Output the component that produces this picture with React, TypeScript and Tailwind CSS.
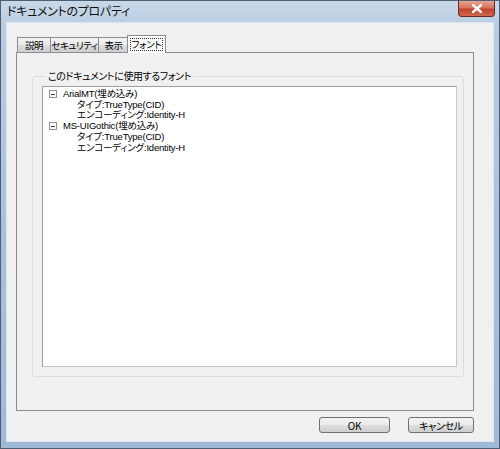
const jp = "font-['Noto_Sans_CJK_JP','Noto_Sans',sans-serif] [font-feature-settings:'palt']";
const tree = "font-['Liberation_Sans','Noto_Sans_CJK_JP',sans-serif] [font-feature-settings:'palt']";

const fonts = [
  {
    name: 'ArialMT(埋め込み)',
    props: ['タイプ:TrueType(CID)', 'エンコーディング:Identity-H'],
  },
  {
    name: 'MS-UIGothic(埋め込み)',
    props: ['タイプ:TrueType(CID)', 'エンコーディング:Identity-H'],
  },
];

const tabs = [
  { id: 'desc', label: '説明', w: 'w-[34px]' },
  { id: 'security', label: 'セキュリティ', w: 'w-[49px]' },
  { id: 'view', label: '表示', w: 'w-[31px]' },
  { id: 'font', label: 'フォント', w: 'w-[39px]' },
];

function MinusBox() {
  return (
    <span className="flex h-[8px] w-[8px] shrink-0 items-center justify-center border border-[#919191] bg-white">
      <span className="h-px w-[4px] bg-[#3c3c3c]" />
    </span>
  );
}

export default function App() {
  const current = 'font';

  return (
    <div
      className={`flex h-[449px] w-[500px] flex-col border border-[#4d5f74] bg-[linear-gradient(180deg,#c9d8e8_0%,#b8cde2_6%,#a9c1dc_50%,#9fb9d7_100%)] ${jp}`}
    >
      {/* title bar */}
      <div className="flex h-[21px] shrink-0 items-start">
        <span className="pl-[6px] pt-[3px] text-[12px] leading-[14px] tracking-[-0.3px] text-[#111]">
          ドキュメントのプロパティ
        </span>
        <button className="ml-auto mr-[4px] flex h-[16px] w-[37px] items-center justify-center rounded-b-[4px] border border-t-0 border-[#6b2a20] bg-[linear-gradient(180deg,#e9a393_0%,#d7735d_45%,#c0432b_55%,#cf6a4f_100%)]">
          <svg width="10" height="9" viewBox="0 0 10 9">
            <path
              d="M1 1 L9 8 M9 1 L1 8"
              stroke="#fff"
              strokeWidth="2.4"
              strokeLinecap="square"
            />
          </svg>
        </button>
      </div>

      {/* client area */}
      <div className="mx-[5px] mb-[6px] flex flex-1 flex-col border border-[#dce6f2] bg-[#f0f0f0] pl-[9px] pr-[19px] pt-[13px]">
        <div className="flex h-[16px] shrink-0 items-end pl-px">
          {tabs.map(tab =>
            tab.id === current ? (
              <div
                key={tab.id}
                className={`relative z-10 -mb-px flex h-[18px] ${tab.w} -ml-px items-start justify-center border border-b-0 border-[#898c95] bg-[#fbfbfb] pt-[2px]`}
              >
                <span className="whitespace-nowrap border border-dotted border-[#333] px-[1px] text-[9.5px] leading-[11px] tracking-[-0.3px] text-black">
                  {tab.label}
                </span>
              </div>
            ) : (
              <div
                key={tab.id}
                className={`flex h-[15px] ${tab.w} -mr-px items-center justify-center whitespace-nowrap border border-b-0 border-[#898c95] bg-[linear-gradient(180deg,#f2f2f2_0%,#ebebeb_50%,#dddddd_51%,#cfcfcf_100%)] text-[9.5px] leading-[11px] tracking-[-0.5px] text-black`}
              >
                {tab.label}
              </div>
            ),
          )}
        </div>

        {/* tab panel */}
        <div className="flex flex-1 flex-col border border-[#898c95] bg-[#f0f0f0] pb-[33px] pl-[15px] pr-[9px] pt-[17px]">
          <fieldset className="flex flex-1 flex-col rounded-[3px] border border-[#d5dfe5] pb-[9px] pl-[9px] pr-[6px] pt-[4px]">
            <legend className="ml-[4px] px-[2px] text-[10px] leading-[12px] tracking-[-0.4px] text-black">
              このドキュメントに使用するフォント
            </legend>
            <div
              className={`flex-1 border border-[#a0a0a0] border-r-[#c8c8c8] border-b-[#c8c8c8] bg-white pl-[6px] pt-[2px] text-[9.5px] leading-[10.7px] tracking-[-0.2px] text-black ${tree}`}
            >
              {fonts.map(font => (
                <div key={font.name}>
                  <div className="flex items-center gap-[6px]">
                    <MinusBox />
                    <span>{font.name}</span>
                  </div>
                  {font.props.map(p => (
                    <div key={p} className="pl-[28px]">
                      {p}
                    </div>
                  ))}
                </div>
              ))}
            </div>
          </fieldset>
        </div>

        {/* buttons */}
        <div className="flex shrink-0 justify-end gap-[18px] pb-[8px] pt-[6px]">
          {['OK', 'キャンセル'].map((t, i) => (
            <button
              key={t}
              className={`flex h-[16px] ${i === 0 ? 'w-[71px]' : 'w-[66px]'} items-center justify-center rounded-[3px] border border-[#707070] bg-[linear-gradient(180deg,#f2f2f2_0%,#ebebeb_50%,#dddddd_51%,#cfcfcf_100%)] text-[10px] leading-[11px] tracking-[-0.3px] text-black`}
            >
              {t}
            </button>
          ))}
        </div>
      </div>
    </div>
  );
}
